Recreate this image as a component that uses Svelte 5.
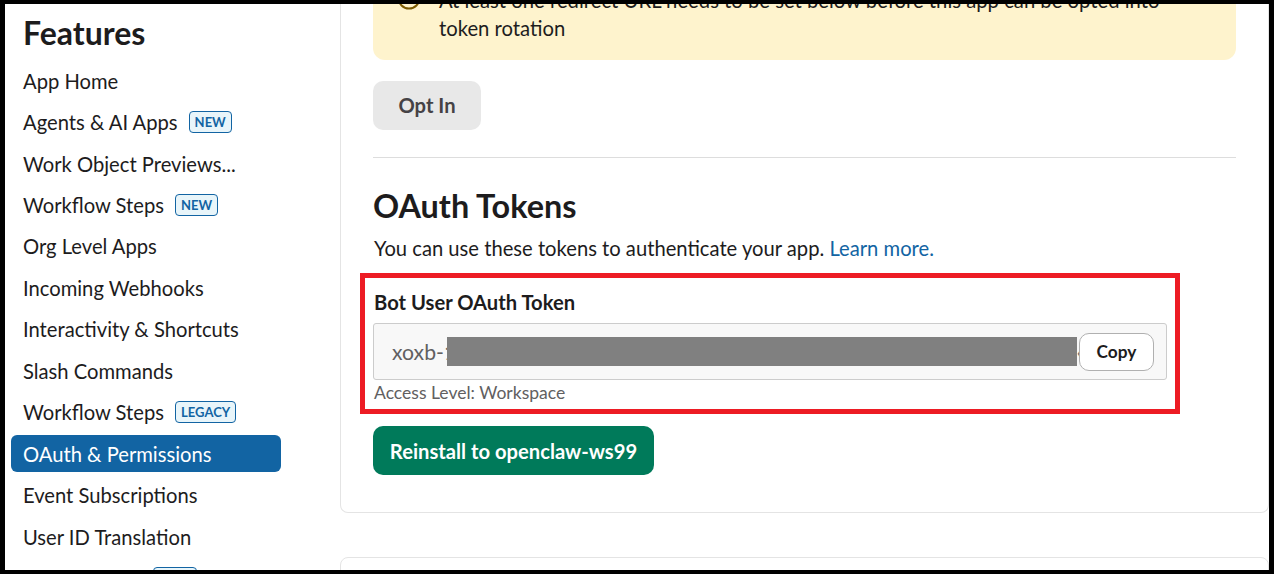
<script>
  const items = [
    { label: 'App Home' },
    { label: 'Agents & AI Apps', badge: 'NEW' },
    { label: 'Work Object Previews...' },
    { label: 'Workflow Steps', badge: 'NEW' },
    { label: 'Org Level Apps' },
    { label: 'Incoming Webhooks' },
    { label: 'Interactivity & Shortcuts' },
    { label: 'Slash Commands' },
    { label: 'Workflow Steps', badge: 'LEGACY' },
    { label: 'OAuth & Permissions', active: true },
    { label: 'Event Subscriptions' },
    { label: 'User ID Translation' },
    { label: 'App Manifest', badge: 'NEW' }
  ];
</script>

<div class="frame">
  <aside class="sidebar">
    <h2>Features</h2>
    <nav>
      {#each items as item}
        <div class="item" class:active={item.active}>
          <span>{item.label}</span>
          {#if item.badge}<span class="badge">{item.badge}</span>{/if}
        </div>
      {/each}
    </nav>
  </aside>

  <main class="main">
    <section class="card">
      <div class="notice">
        <svg class="notice-icon" width="24" height="24" viewBox="0 0 24 24" fill="none">
          <circle cx="12" cy="12" r="10.5" stroke="#7c5a00" stroke-width="2" />
        </svg>
        <p>At least one redirect URL needs to be set below before this app can be opted into token rotation</p>
      </div>

      <button class="btn-opt">Opt In</button>
      <hr />

      <h1>OAuth Tokens</h1>
      <p class="lead">You can use these tokens to authenticate your app. <a href="#learn">Learn more.</a></p>

      <div class="token-block">
        <div class="annotation"></div>
        <div class="token-label">Bot User OAuth Token</div>
        <div class="token-field">
          <span class="token-text">xoxb-1</span>
          <span class="redaction"></span>
          <span class="sliver">‹</span>
          <button class="btn-copy">Copy</button>
        </div>
        <div class="access">Access Level: Workspace</div>
      </div>

      <button class="btn-install">Reinstall to openclaw-ws99</button>
    </section>
    <section class="card next"></section>
  </main>
</div>

<style>
  :global(body) {
    margin: 0;
    background: #000;
  }
  .frame {
    box-sizing: border-box;
    display: flex;
    width: 1264px;
    height: 566px;
    margin: 4px 5px;
    background: #fff;
    overflow: hidden;
    font-family: Lato, "Liberation Sans", sans-serif;
    color: #1d1c1d;
  }
  .sidebar {
    flex: 0 0 335px;
    box-sizing: border-box;
    padding: 9px 59px 0 6px;
  }
  h2 {
    margin: 0 0 9px 12px;
    font-size: 32px;
    line-height: 40px;
    font-weight: 700;
  }
  .item {
    display: flex;
    align-items: center;
    gap: 11px;
    height: 37.45px;
    margin-bottom: 4px;
    padding-left: 12px;
    border-radius: 6px;
    font-size: 20.2px;
    white-space: nowrap;
  }
  .item.active {
    background: #1264a3;
    color: #fff;
  }
  .badge {
    box-sizing: border-box;
    height: 22px;
    padding: 0 5px;
    border: 1px solid #1264a3;
    border-radius: 4px;
    background: #e8f5fa;
    color: #1264a3;
    font-size: 13px;
    line-height: 20px;
    font-weight: 700;
  }
  .main {
    flex: 1;
    min-width: 0;
  }
  .card {
    box-sizing: border-box;
    margin-top: -40px;
    height: 549px;
    padding: 0 32px 0 32px;
    border: 1px solid #e4e4e4;
    border-top: 0;
    border-radius: 0 0 8px 8px;
  }
  .card.next {
    margin-top: 44px;
    height: 60px;
    border-top: 1px solid #e4e4e4;
    border-radius: 8px 8px 0 0;
  }
  .notice {
    display: flex;
    gap: 18px;
    height: 96px;
    box-sizing: border-box;
    padding: 22px 60px 0 24px;
    border-radius: 0 0 12px 12px;
    background: #fef3cd;
  }
  .notice-icon {
    flex: none;
    margin-top: 0;
  }
  .notice p {
    margin: 0;
    font-size: 20.25px;
    line-height: 28px;
  }
  .btn-opt {
    display: block;
    width: 108px;
    height: 49px;
    margin-top: 21px;
    padding: 0 0 2px;
    border: 0;
    border-radius: 10px;
    background: #e8e8e8;
    color: #454245;
    font: 700 20.2px Lato, sans-serif;
  }
  hr {
    margin: 27px 0 0;
    border: 0;
    border-top: 1px solid #ddd;
  }
  h1 {
    margin: 26px 0 0;
    font-size: 32.4px;
    line-height: 44px;
    font-weight: 700;
  }
  .lead {
    margin: 6px 0 0;
    padding-left: 1px;
    font-size: 20.2px;
    line-height: 28px;
  }
  .lead a {
    color: #1264a3;
    text-decoration: none;
  }
  .token-block {
    position: relative;
    width: 794px;
    margin-top: 11px;
    padding-top: 17px;
  }
  .annotation {
    position: absolute;
    inset: 0 -13px 0 -13px;
    height: 131px;
    border: 5px solid #ed1c24;
    pointer-events: none;
  }
  .token-label {
    font-size: 20.2px;
    line-height: 24px;
    font-weight: 700;
    padding-left: 1px;
  }
  .token-field {
    display: flex;
    align-items: center;
    box-sizing: border-box;
    height: 57px;
    margin-top: 9px;
    padding: 0 12px 0 18px;
    border: 1px solid #ccc;
    border-radius: 3px;
    background: #f8f8f8;
  }
  .token-text {
    font-size: 21.2px;
    color: #616061;
    width: 55px;
    flex: none;
    overflow: hidden;
    white-space: nowrap;
  }
  .redaction {
    width: 630px;
    height: 29px;
    background: #808080;
    flex: none;
  }
  .sliver {
    width: 2px;
    font-size: 16px;
    color: #616061;
    overflow: hidden;
    flex: none;
  }
  .btn-copy {
    box-sizing: border-box;
    width: 75px;
    height: 38px;
    margin-left: auto;
    border: 1px solid #b0b0b0;
    border-radius: 10px;
    background: #fff;
    color: #1d1c1d;
    font: 700 17.3px Lato, sans-serif;
  }
  .access {
    margin-top: 1px;
    padding-left: 1px;
    font-size: 17.55px;
    line-height: 24px;
    color: #616061;
  }
  .btn-install {
    display: block;
    width: 281px;
    height: 49px;
    margin-top: 21px;
    border: 0;
    border-radius: 10px;
    background: #007a5a;
    color: #fff;
    font: 700 20.2px Lato, sans-serif;
  }
</style>
